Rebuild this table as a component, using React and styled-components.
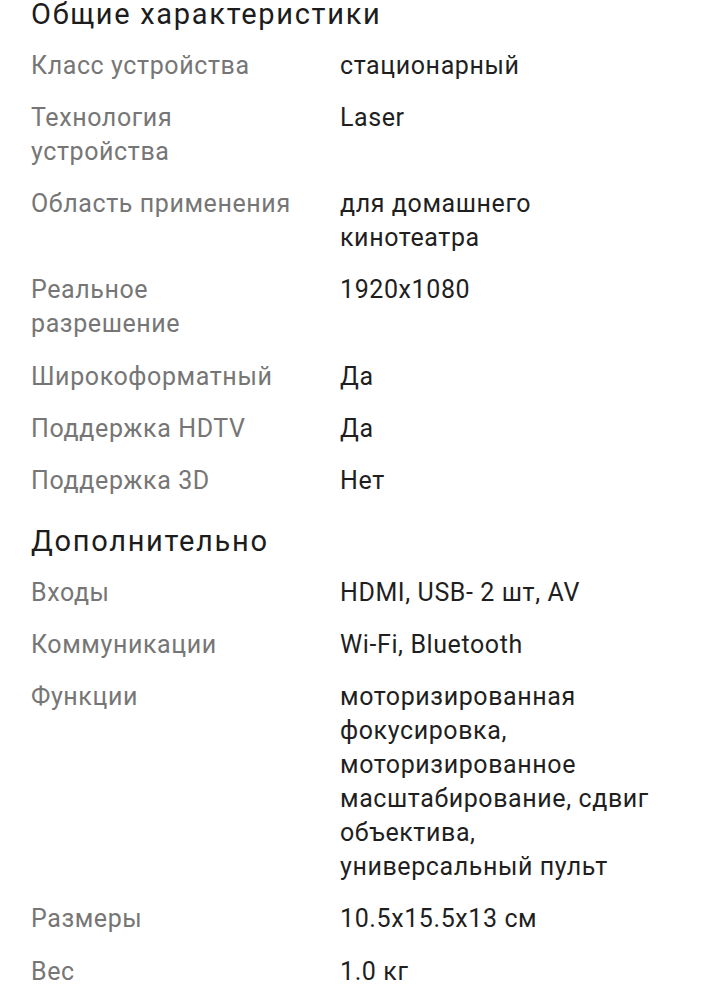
import styled, { createGlobalStyle } from "styled-components";

const GlobalStyle = createGlobalStyle`
  body {
    margin: 0;
    background: #ffffff;
    font-family: Roboto, "Noto Sans", sans-serif;
  }
`;

const sections = [
  {
    title: "Общие характеристики",
    rows: [
      ["Класс устройства", "стационарный"],
      ["Технология устройства", "Laser"],
      ["Область применения", "для домашнего кинотеатра"],
      ["Реальное разрешение", "1920x1080"],
      ["Широкоформатный", "Да"],
      ["Поддержка HDTV", "Да"],
      ["Поддержка 3D", "Нет"],
    ],
  },
  {
    title: "Дополнительно",
    rows: [
      ["Входы", "HDMI, USB- 2 шт, AV"],
      ["Коммуникации", "Wi-Fi, Bluetooth"],
      [
        "Функции",
        "моторизированная фокусировка, моторизированное масштабирование, сдвиг объектива, универсальный пульт",
      ],
      ["Размеры", "10.5x15.5x13 см"],
      ["Вес", "1.0 кг"],
    ],
  },
];

export default function App() {
  return (
    <>
      <GlobalStyle />
      <Page>
        {sections.map((section) => (
          <Section key={section.title}>
            <Heading>{section.title}</Heading>
            {section.rows.map(([label, value]) => (
              <Row key={label}>
                <Label>{label}</Label>
                <Value>{value}</Value>
              </Row>
            ))}
          </Section>
        ))}
      </Page>
    </>
  );
}

const Page = styled.div`
  margin-top: -4px;
  padding: 0 10px 0 31px;
`;

const Section = styled.section`
  & + & {
    margin-top: 16px;
  }
`;

const Heading = styled.h2`
  margin: 0 0 8px;
  font-size: 29px;
  line-height: 36px;
  letter-spacing: 1.7px;
  font-weight: 400;
  color: #1c1c1c;
`;

const Row = styled.div`
  display: grid;
  grid-template-columns: 268px 322px;
  column-gap: 41px;
  padding: 9px 0 9.15px;
  font-size: 25px;
  line-height: 34px;
  letter-spacing: 0.6px;
`;

const Label = styled.div`
  color: #767676;
`;

const Value = styled.div`
  color: #1f1f1f;
`;
